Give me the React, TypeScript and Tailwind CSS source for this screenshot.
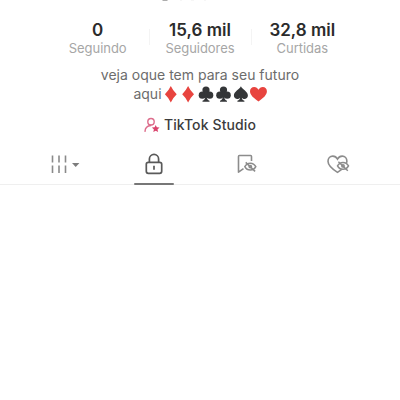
import { type ReactNode } from "react";

const STATS = [
  { value: "0", label: "Seguindo" },
  { value: "15,6 mil", label: "Seguidores" },
  { value: "32,8 mil", label: "Curtidas" },
];

export default function App() {
  return (
    <div className="h-[400px] w-[400px] overflow-hidden bg-white font-['Inter',sans-serif]">
      <HandleEdge />
      <div className="mx-auto mt-[17px] flex w-[307px]">
        {STATS.map((stat, index) => (
          <div key={stat.label} className="relative w-1/3 text-center">
            {index > 0 && <span className="absolute top-2.5 left-0 h-4 w-px bg-[#f4f4f4]" />}
            <p className="text-[17px] leading-[22px] font-semibold whitespace-nowrap text-[#2b2b2b]">{stat.value}</p>
            <p className="text-[13px] leading-[14px] tracking-[-0.05px] whitespace-nowrap text-[#a6a6a6]">
              {stat.label}
            </p>
          </div>
        ))}
      </div>

      <div className="mt-[11px] text-[14px] leading-[18px] text-[#6c6c6c]">
        <p className="text-center whitespace-nowrap">veja oque tem para seu futuro</p>
        <div className="mt-px flex justify-center">
          <span>aqui</span>
          <Suits />
        </div>
      </div>

      <div className="mt-[13px] flex h-[18px] items-center justify-center gap-[3px]">
        <StudioIcon />
        <span className="text-[14px] leading-[18px] font-medium tracking-[0.12px] whitespace-nowrap text-[#3c3c3c]">
          TikTok Studio
        </span>
      </div>

      <div className="mt-[11px] flex h-[40px] border-b border-[#efefef] px-[17px]">
        <Tab>
          <GridIcon />
        </Tab>
        <Tab active>
          <LockIcon />
        </Tab>
        <Tab>
          <SavedIcon />
        </Tab>
        <Tab>
          <LikedIcon />
        </Tab>
      </div>
    </div>
  );
}

function Tab({ active, children }: { active?: boolean; children: ReactNode }) {
  return (
    <div className="relative flex w-1/4 items-center justify-center pb-px">
      {children}
      {active && <span className="absolute -bottom-px h-0.5 w-10 rounded-full bg-[#777]" />}
    </div>
  );
}

// bottom edge of the handle that is scrolled out of view
function HandleEdge() {
  return (
    <svg className="block" width="400" height="2" viewBox="0 0 400 2" fill="none">
      <path d="M162.5 0h5" stroke="#999" strokeWidth="1.6" />
      <path d="M180 0h2M191 0h3M204 0h2" stroke="#eee" />
    </svg>
  );
}

function Suits() {
  return (
    <svg width="105" height="18" viewBox="0 0 105 18">
      <g fill="#e8443f">
        <path d="M8.8 1Q11 5.7 14.7 9.2 11 12.7 8.8 17.4 6.6 12.7 2.9 9.2 6.6 5.7 8.8 1Z" />
        <path d="M26.1 1Q28.3 5.7 32 9.2 28.3 12.7 26.1 17.4 23.9 12.7 20.2 9.2 23.9 5.7 26.1 1Z" />
        <path d="M96.5 16.6C92 13.3 88 10.2 88 6.3c0-2.6 1.8-4.4 4.2-4.4 2 0 3.4 1.1 4.3 2.8.9-1.7 2.3-2.8 4.3-2.8 2.4 0 4.1 1.8 4.1 4.4 0 3.9-3.9 7-8.4 10.3Z" />
      </g>
      <g fill="#343638">
        <Club x={44} />
        <Club x={61.5} />
        <path d="M78.9 1.2c1.5 3.1 7 5.4 7 9.2 0 3.5-4.1 4.7-6.1 2.3.2 1.6.9 2.5 2.6 3v1h-7v-1c1.7-.5 2.4-1.4 2.6-3-2 2.4-6.1 1.2-6.1-2.3 0-3.8 5.5-6.1 7-9.2Z" />
      </g>
    </svg>
  );
}

function Club({ x }: { x: number }) {
  return (
    <g transform={`translate(${x} 0)`}>
      <circle cx="0" cy="5" r="3.6" />
      <circle cx="-3.7" cy="10.2" r="3.6" />
      <circle cx="3.7" cy="10.2" r="3.6" />
      <path d="M-1.5 6h3l-.6 6.5c.2 1.7.9 2.7 2.6 3.2v1h-7v-1c1.7-.5 2.4-1.5 2.6-3.2Z" />
    </g>
  );
}

function StudioIcon() {
  return (
    <svg width="17" height="18" viewBox="0 0 17 18" fill="none">
      <circle cx="7" cy="5.7" r="3.2" stroke="#dd6d8c" strokeWidth="1.4" />
      <path d="M1 15.4c.2-3.3 2.1-5.6 5.9-5.9" stroke="#dd6d8c" strokeWidth="1.4" strokeLinecap="round" />
      <path d="m11.7 8.9 1.1 2.4 2.7.3-2 1.8.6 2.6-2.4-1.3-2.4 1.3.6-2.6-2-1.8 2.7-.3Z" fill="#d9436c" />
    </svg>
  );
}

function GridIcon() {
  return (
    <svg className="ml-[5px]" width="30" height="20" viewBox="0 0 30 20" fill="none">
      <path d="M2.5 1.5v7M9 1.5v7M15.5 1.5v7M2.5 11.5v7.5M9 11.5v7.5M15.5 11.5v7.5" stroke="#8a8a8a" strokeWidth="1.6" />
      <path d="M22 9h7.4l-3.7 4Z" fill="#7c7c7c" />
    </svg>
  );
}

function LockIcon() {
  return (
    <svg width="20" height="22" viewBox="0 0 20 22" fill="none" stroke="#5a5a5a" strokeWidth="1.7">
      <rect x="2.3" y="9.3" width="15.4" height="11" rx="2" />
      <path d="M5.4 9.3V6a4.6 4.6 0 0 1 9.2 0v3.3M10 12.7v4" />
    </svg>
  );
}

function HiddenEye({ x, y }: { x: number; y: number }) {
  return (
    <g transform={`translate(${x} ${y})`} stroke="#8c8c8c" strokeWidth="1.5">
      <path d="M-5.5 0C-3-4.6 3-4.6 5.5 0 3 4.6-3 4.6-5.5 0Z" fill="#fff" />
      <circle cx="0" cy="0" r="1.2" />
      <path d="m-4.6 -4.2 9.4 9" />
    </g>
  );
}

function SavedIcon() {
  return (
    <svg className="ml-0.5" width="22" height="22" viewBox="0 0 22 22" fill="none">
      <path d="M15.5 8V3.4q0-.9-.9-.9H3.4q-.9 0-.9.9v15.8l5-3.6" stroke="#8c8c8c" strokeWidth="1.6" strokeLinejoin="round" />
      <HiddenEye x={14.3} y={13.6} />
    </svg>
  );
}

function LikedIcon() {
  return (
    <svg className="ml-0.5" width="24" height="22" viewBox="0 0 24 22" fill="none">
      <path
        d="M11.5 19.4C6 15.9 2 12.6 2 8.3c0-3.1 2.1-5.2 4.8-5.2 2.1 0 3.7 1.1 4.7 3 1-1.9 2.6-3 4.7-3 2.7 0 4.7 2.1 4.7 5.2 0 4.3-3.9 7.6-9.4 11.1Z"
        stroke="#8c8c8c"
        strokeWidth="1.6"
      />
      <HiddenEye x={17} y={12.9} />
    </svg>
  );
}
